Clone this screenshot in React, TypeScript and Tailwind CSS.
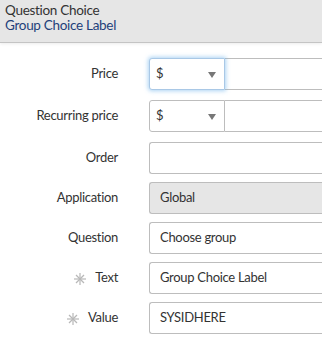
import React from "react";

const font = { fontFamily: "Lato, 'Source Sans Pro', 'Noto Sans', sans-serif" };

function Asterisk() {
  return (
    <svg width="12" height="12" viewBox="0 0 12 12" className="mr-[9px] mt-[2px]">
      <g stroke="#b8b8b8" strokeWidth="1.2" strokeLinecap="butt">
        <line x1="0" y1="6" x2="12" y2="6" />
        <line x1="6" y1="0" x2="6" y2="12" />
        <line x1="2" y1="2" x2="10" y2="10" />
        <line x1="10" y1="2" x2="2" y2="10" />
      </g>
    </svg>
  );
}

function Label({ text, required }: { text: string; required?: boolean }) {
  return (
    <div className="w-[118px] shrink-0 flex items-center justify-end text-[13px] tracking-[-0.3px] text-[#333333]">
      {required && <Asterisk />}
      <span>{text}</span>
    </div>
  );
}

function Caret() {
  return (
    <svg width="8" height="6" viewBox="0 0 8 6" className="absolute left-[58px] top-[13px]">
      <path d="M0 0 L8 0 L4 6 Z" fill="#777777" />
    </svg>
  );
}

function PriceRow({ label, focused }: { label: string; focused?: boolean }) {
  return (
    <div className="flex items-center h-[32px] mb-[10px]">
      <Label text={label} />
      <div className="ml-[31px] flex flex-1 h-[32px]">
        <div
          className={`relative w-[76px] h-[32px] border rounded-l-[3px] bg-white text-[13px] text-[#333] pl-[6px] flex items-center ${
            focused ? "shadow-[0_0_4px_1px_rgba(102,175,233,0.55)] border-[#a9c8e6]" : "border-[#bdbdbd]"
          }`}
        >
          $
          <Caret />
        </div>
        <div className="flex-1 h-[32px] border-y border-[#bdbdbd] bg-white" />
      </div>
    </div>
  );
}

function TextRow({
  label,
  value,
  required,
  readOnly,
}: {
  label: string;
  value?: string;
  required?: boolean;
  readOnly?: boolean;
}) {
  return (
    <div className="flex items-center h-[32px] mb-[8px]">
      <Label text={label} required={required} />
      <div
        className={`ml-[31px] flex-1 h-[32px] border border-r-0 border-[#bdbdbd] rounded-l-[3px] pl-[10px] flex items-center text-[13px] tracking-[-0.3px] text-[#333] ${
          readOnly ? "bg-[#e6e6e6]" : "bg-white"
        }`}
      >
        {value}
      </div>
    </div>
  );
}

export default function App() {
  return (
    <div className="w-[322px] h-[343px] bg-white overflow-hidden" style={font}>
      <div className="h-[43px] bg-[#e6e6e6] border-b border-[#c4c4c4] px-[5px] pt-[3px] text-[13.5px] tracking-[-0.3px] leading-[15px] shadow-[0_1px_3px_rgba(0,0,0,0.08)]">
        <div className="text-[#333333]">Question Choice</div>
        <div className="text-[#1f3f7a]">Group Choice Label</div>
      </div>
      <div className="pt-[15px]">
        <PriceRow label="Price" focused />
        <PriceRow label="Recurring price" />
        <TextRow label="Order" />
        <TextRow label="Application" value="Global" readOnly />
        <TextRow label="Question" value="Choose group" />
        <TextRow label="Text" value="Group Choice Label" required />
        <TextRow label="Value" value="SYSIDHERE" required />
      </div>
    </div>
  );
}
